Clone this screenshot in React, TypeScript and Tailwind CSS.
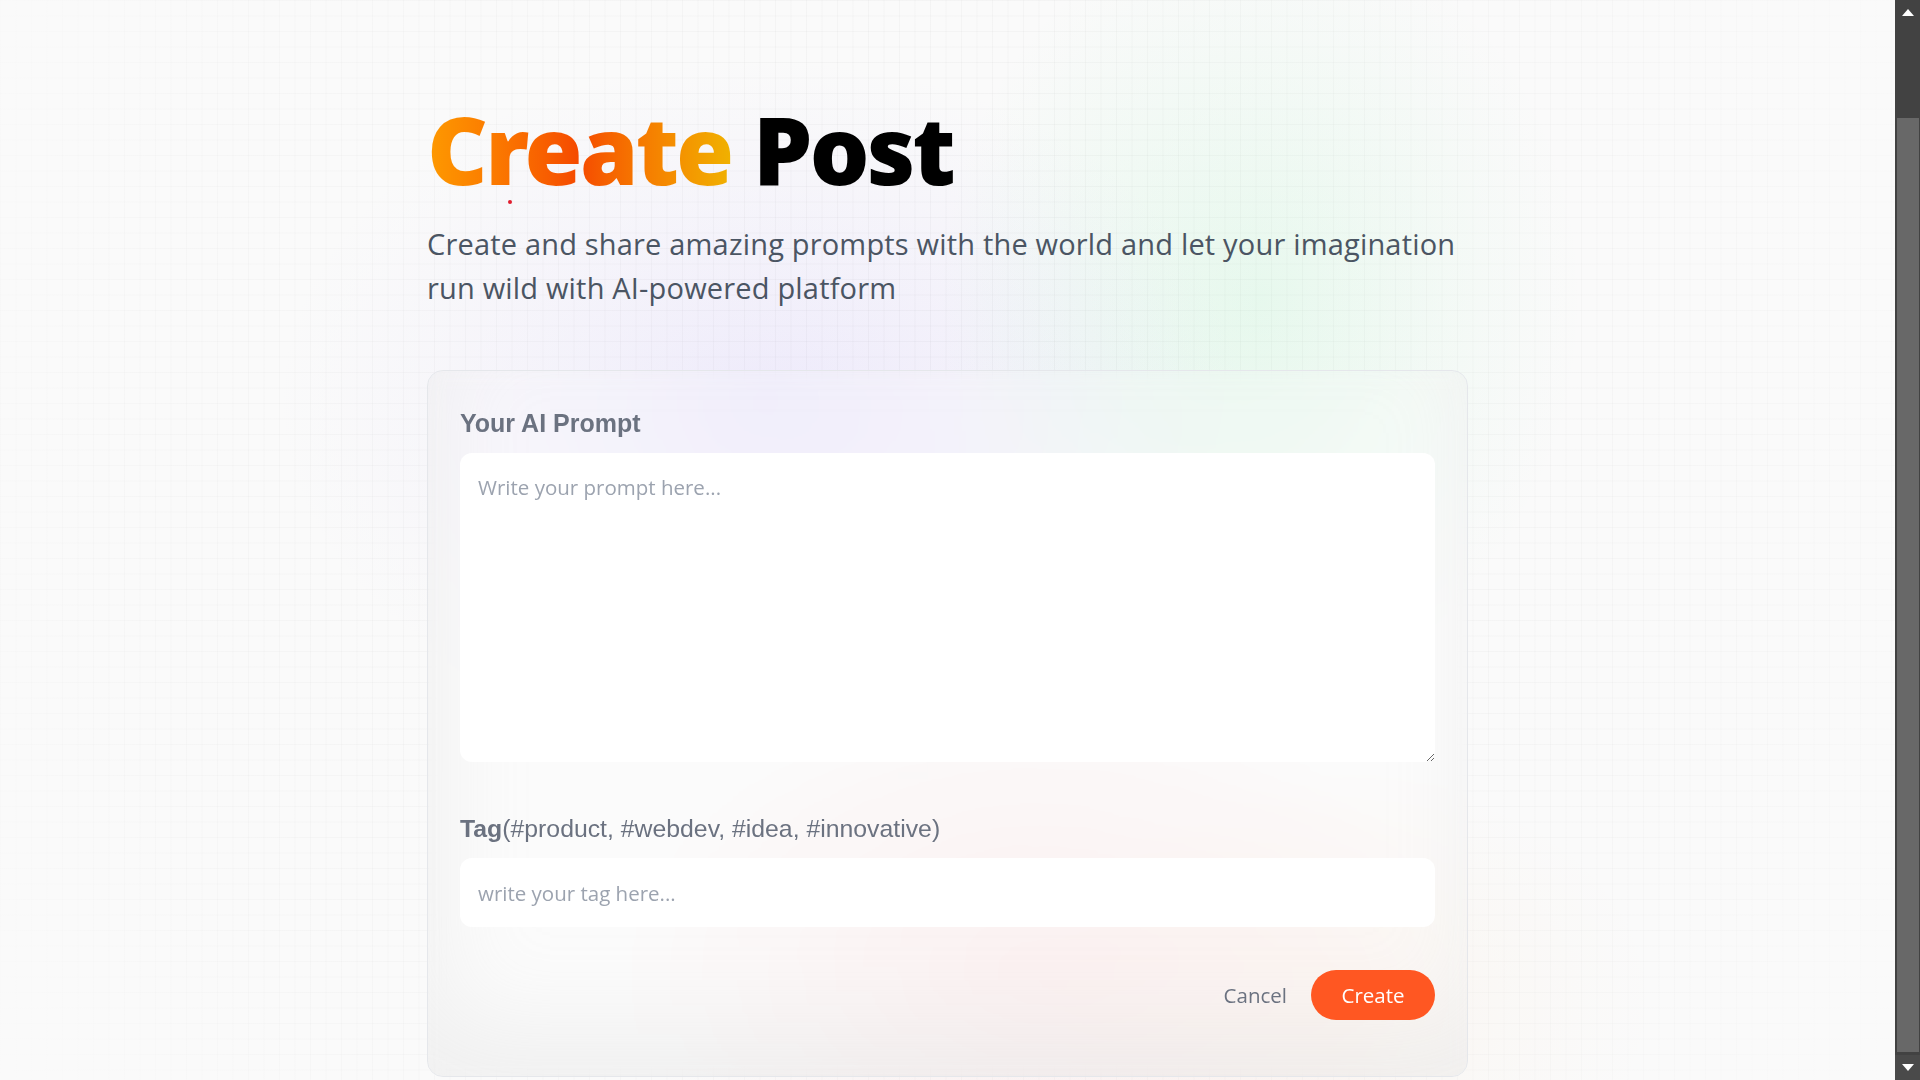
import React from 'react';

// -----------------------------------------------------------------------------
// Components
// -----------------------------------------------------------------------------

const Scrollbar: React.FC = () => (
  <div className="flex h-screen w-[25px] shrink-0 flex-col bg-[#424242]">
    <div className="flex h-[25px] items-center justify-center">
      <svg width="12" height="7" viewBox="0 0 12 7">
        <polygon points="6,0 12,7 0,7" fill="#ffffff" />
      </svg>
    </div>
    <div className="h-[93px]" />
    <div className="ml-[2px] mr-[1px] h-[934px] bg-[#686868]" />
    <div className="flex-1" />
    <div className="flex h-[25px] items-center justify-center bg-[#4a4a4a]">
      <svg width="12" height="7" viewBox="0 0 12 7">
        <polygon points="0,0 12,0 6,7" fill="#ffffff" />
      </svg>
    </div>
  </div>
);

export default function App() {
  return (
    <div className="flex h-screen w-full overflow-hidden bg-[#fafafa] font-['Open_Sans',sans-serif]">
      <main className="relative flex-1 overflow-hidden">
        {/* Background: grid, soft colour blobs and a fade towards the edges. */}
        <div className="pointer-events-none absolute inset-0 bg-[linear-gradient(to_right,rgba(0,0,0,0.035)_1px,transparent_1px),linear-gradient(to_bottom,rgba(0,0,0,0.035)_1px,transparent_1px)] bg-[size:15.5px_15.5px]" />
        <div className="pointer-events-none absolute inset-0 bg-[radial-gradient(ellipse_480px_340px_at_760px_400px,rgba(196,181,253,0.26),transparent),radial-gradient(ellipse_320px_380px_at_1260px_300px,rgba(134,239,172,0.22),transparent),radial-gradient(ellipse_420px_260px_at_1050px_980px,rgba(252,165,165,0.22),transparent),radial-gradient(ellipse_300px_220px_at_1350px_1000px,rgba(253,186,116,0.12),transparent)]" />
        <div className="pointer-events-none absolute inset-0 bg-[radial-gradient(circle_at_50%_45%,rgba(250,250,250,0)_0,rgba(250,250,250,0.55)_75%,#fafafa_100%)]" />

        <section className="relative mx-auto w-[1041px] pt-[95px]">
          <h1 className="font-['Noto_Sans',sans-serif] text-[94px] font-black leading-[108px] tracking-[-2.8px] text-black">
            <span className="bg-gradient-to-r from-amber-500 via-orange-600 to-yellow-500 bg-clip-text text-transparent">
              Create
            </span>{' '}
            Post
          </h1>
          <div className="ml-[81px] mt-[-3px] h-[4px] w-[4px] rounded-full bg-[#e11d2e]" />
          <p className="mt-[18px] text-[29px] leading-[44px] tracking-[0.18px] text-[#4b5563]">
            Create and share amazing prompts with the world and let your imagination
            <br />
            run wild with AI-powered platform
          </p>

          <form className="mt-[60px] flex flex-col rounded-[16px] border border-[#e5e7eb] bg-white/20 px-[32px] pb-[56px] pt-[38px] shadow-[inset_10px_-50px_94px_0_rgba(199,199,199,0.2)] backdrop-blur">
            <label className="font-['Liberation_Sans',sans-serif] text-[25px] font-bold leading-[28px] text-[#6b7280]">
              Your AI Prompt
            </label>
            <textarea
              className="mt-[16px] h-[309px] w-full rounded-[12px] bg-white px-[18px] pt-[19px] text-[20.5px] leading-[31px] text-gray-500 outline-none placeholder:text-[#9ca3af]"
              placeholder="Write your prompt here..."
            />

            <label className="mt-[53px] font-['Liberation_Sans',sans-serif] text-[24.8px] leading-[28px] text-[#6b7280]">
              <span className="font-bold">Tag</span>(#product, #webdev, #idea, #innovative)
            </label>
            <input
              className="mt-[15px] h-[69px] w-full rounded-[12px] bg-white px-[18px] text-[20.5px] text-gray-500 outline-none placeholder:text-[#9ca3af]"
              placeholder="write your tag here..."
            />

            <div className="mt-[43px] flex items-center justify-end gap-[24px]">
              <button type="button" className="text-[20.5px] text-[#6b7280]">
                Cancel
              </button>
              <button
                type="submit"
                className="flex h-[50px] w-[124px] items-center justify-center rounded-full bg-[#ff5722] text-[20.5px] text-white"
              >
                Create
              </button>
            </div>
          </form>
        </section>
      </main>
      <Scrollbar />
    </div>
  );
}
